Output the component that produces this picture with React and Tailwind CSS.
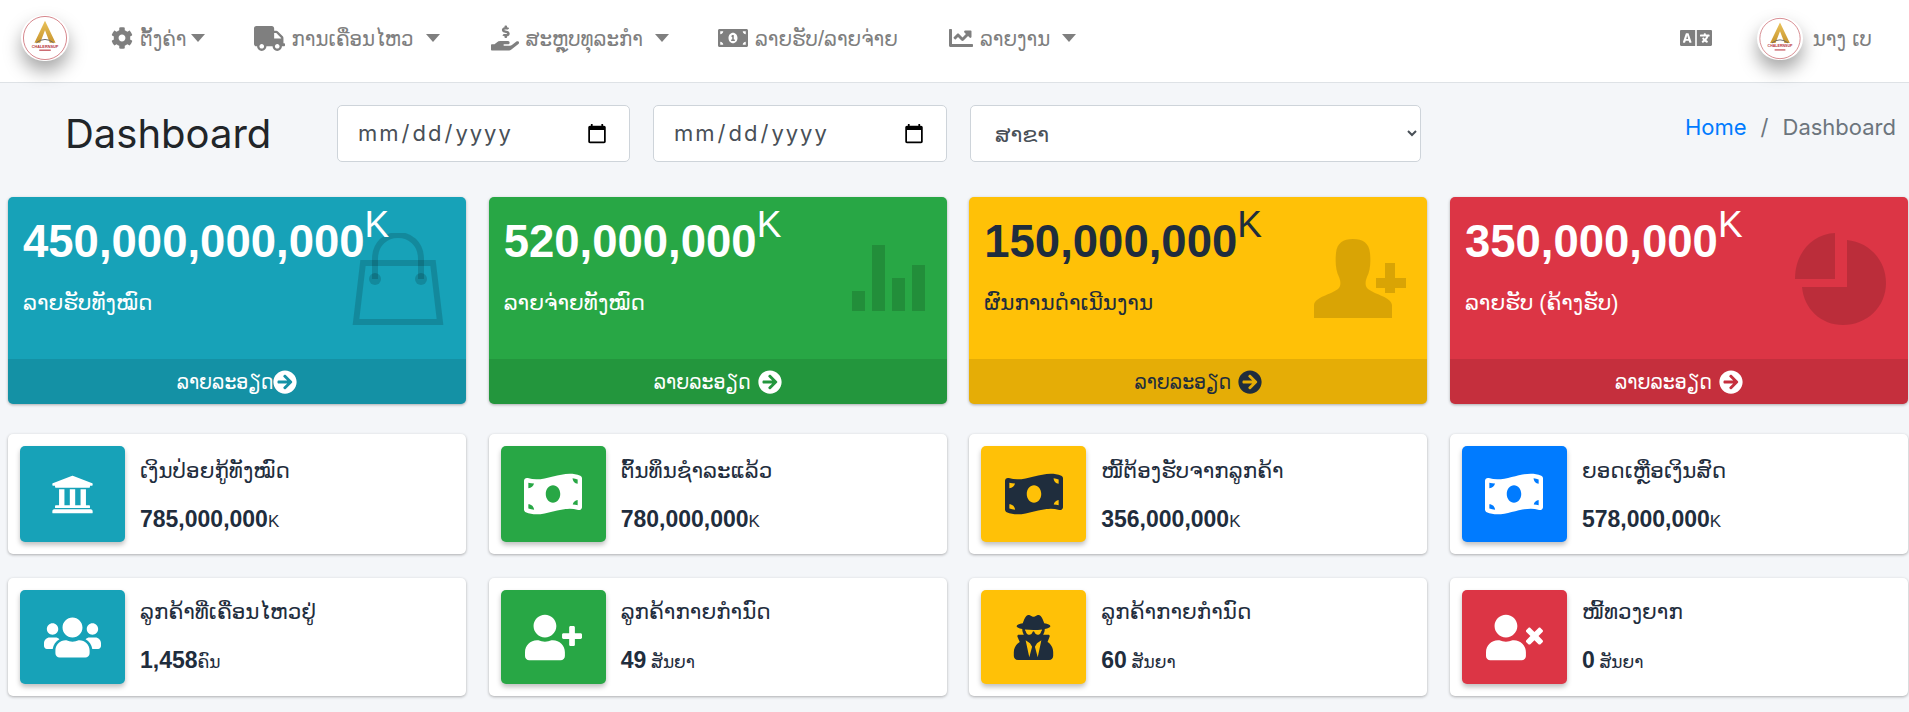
import {
  FaCog,
  FaTruck,
  FaHandHoldingUsd,
  FaMoneyBillAlt,
  FaChartLine,
  FaLanguage,
  FaUniversity,
  FaMoneyBillWave,
  FaUsers,
  FaUserPlus,
  FaUserSecret,
  FaUserTimes,
  FaArrowCircleRight,
} from "react-icons/fa";

const Logo = ({ className, id }) => (
  <div className={`shrink-0 rounded-full bg-white shadow-[0_10px_18px_rgba(0,0,0,0.35)] ${className}`}>
    <svg viewBox="0 0 48 48" className="h-full w-full">
      <defs>
        <linearGradient id={id} x1="0" y1="0" x2="0" y2="1">
          <stop offset="0" stopColor="#e9c25a" />
          <stop offset="1" stopColor="#c9962f" />
        </linearGradient>
      </defs>
      <circle cx="24" cy="24" r="22.5" fill="#fff" stroke="#c9636b" strokeWidth="0.8" />
      <path d="M24 6 L35 29 H29 L24 16 L19 29 H13 Z" fill={`url(#${id})`} />
      <path d="M15 29 Q24 22 33 29" fill="none" stroke="#666" strokeWidth="1" />
      <text x="24" y="34" textAnchor="middle" fontSize="4" fontWeight="700" fill="#b5343c">CHALERNSUP</text>
      <rect x="18" y="36" width="12" height="1.5" fill="#c9636b" />
    </svg>
  </div>
);

const BagIcon = () => (
  <svg viewBox="0 0 92 92" className="h-[92px] w-[92px]" fill="none" stroke="currentColor">
    <path d="M11 30 H81 L88 89 H4 Z" strokeWidth="6" />
    <path d="M23 46 V26 C23 -6 69 -6 69 26 V46" strokeWidth="6" />
    <circle cx="23" cy="46" r="6" fill="currentColor" stroke="none" />
    <circle cx="69" cy="46" r="6" fill="currentColor" stroke="none" />
  </svg>
);

const BarsIcon = () => (
  <svg viewBox="0 0 73 66" className="h-[66px] w-[73px]" fill="currentColor">
    <rect x="0" y="46" width="13" height="20" />
    <rect x="20" y="0" width="13" height="66" />
    <rect x="40" y="33" width="13" height="33" />
    <rect x="60" y="20" width="13" height="46" />
  </svg>
);

const PersonAddIcon = () => (
  <svg viewBox="0 0 92 79" className="h-[79px] w-[92px]" fill="currentColor">
    <path d="M0 79 V66 C1 58 16 56 24 50 C27 47 27 43 25 38 C22 32 21 24 22 14 C23 4 29 0 39 0 C49 0 55 4 56 14 C57 24 56 32 53 38 C51 43 51 47 54 50 C62 56 77 58 78 66 V79 Z" />
    <path d="M71 24 H81 V39 H92 V49 H81 V54 H71 V49 H62 V39 H71 Z" />
  </svg>
);

const PieIcon = () => (
  <svg viewBox="0 0 91 92" className="h-[92px] w-[91px]" fill="currentColor">
    <path d="M40 0 V46 H0 C0 20 17 1 40 0 Z" />
    <path d="M52 7 C74 9 91 27 91 50 C91 74 72 92 48 92 C26 92 9 76 7 54 H52 Z" />
  </svg>
);

const navItems = [
  { icon: FaCog, label: "ຕັ້ງຄ່າ", caret: true, gap: "mr-[49px]", iconCls: "text-[22px]", caretCls: "ml-[4px]" },
  { icon: FaTruck, label: "ການເຄື່ອນໄຫວ", caret: true, gap: "mr-[51px]", iconCls: "text-[31px]", caretCls: "ml-[12px]" },
  { icon: FaHandHoldingUsd, label: "ສະຫຼຸບທຸລະກຳ", caret: true, gap: "mr-[49px]", iconCls: "text-[28px]", caretCls: "ml-[12px]" },
  { icon: FaMoneyBillAlt, label: "ລາຍຮັບ/ລາຍຈ່າຍ", caret: false, gap: "mr-[51px]", iconCls: "text-[30px]", caretCls: "" },
  { icon: FaChartLine, label: "ລາຍງານ", caret: true, gap: "", iconCls: "text-[24px]", caretCls: "ml-[12px]" },
];

const bigCards = [
  { value: "450,000,000,000", label: "ລາຍຮັບທັງໝົດ", bg: "bg-[#17a2b8]", text: "text-white", Icon: BagIcon, pos: "top-[36px] right-[22px]", arrowGap: "ml-0" },
  { value: "520,000,000", label: "ລາຍຈ່າຍທັງໝົດ", bg: "bg-[#28a745]", text: "text-white", Icon: BarsIcon, pos: "top-[48px] right-[22px]", arrowGap: "ml-[7px]" },
  { value: "150,000,000", label: "ຜົນການດຳເນີນງານ", bg: "bg-[#ffc107]", text: "text-[#1f2d3d]", Icon: PersonAddIcon, pos: "top-[42px] right-[21px]", arrowGap: "ml-[7px]" },
  { value: "350,000,000", label: "ລາຍຮັບ (ຄ້າງຮັບ)", bg: "bg-[#dc3545]", text: "text-white", Icon: PieIcon, pos: "top-[36px] right-[22px]", arrowGap: "ml-[7px]" },
];

const infoRows = [
  {
    height: "h-[120px]",
    shift: "pt-[4px]",
    items: [
      { icon: FaUniversity, size: "text-[43px]", bg: "bg-[#17a2b8]", fg: "text-white", title: "ເງິນປ່ອຍກູ້ທັງໝົດ", value: "785,000,000", unit: "K" },
      { icon: FaMoneyBillWave, size: "text-[58px]", bg: "bg-[#28a745]", fg: "text-white", title: "ຕົ້ນທຶນຊຳລະແລ້ວ", value: "780,000,000", unit: "K" },
      { icon: FaMoneyBillWave, size: "text-[58px]", bg: "bg-[#ffc107]", fg: "text-[#1f2d3d]", title: "ໜີ້ຕ້ອງຮັບຈາກລູກຄ້າ", value: "356,000,000", unit: "K" },
      { icon: FaMoneyBillWave, size: "text-[58px]", bg: "bg-[#007bff]", fg: "text-white", title: "ຍອດເຫຼືອເງິນສົດ", value: "578,000,000", unit: "K" },
    ],
  },
  {
    height: "h-[118px]",
    shift: "",
    items: [
      { icon: FaUsers, size: "text-[57px]", bg: "bg-[#17a2b8]", fg: "text-white", title: "ລູກຄ້າທີ່ເຄື່ອນໄຫວຢູ່", value: "1,458", unit: "ຄົນ" },
      { icon: FaUserPlus, size: "text-[57px]", bg: "bg-[#28a745]", fg: "text-white", title: "ລູກຄ້າກາຍກຳນົດ", value: "49", unit: " ສັນຍາ" },
      { icon: FaUserSecret, size: "text-[45px]", bg: "bg-[#ffc107]", fg: "text-[#1f2d3d]", title: "ລູກຄ້າກາຍກຳນົດ", value: "60", unit: " ສັນຍາ" },
      { icon: FaUserTimes, size: "text-[57px]", bg: "bg-[#dc3545]", fg: "text-white", title: "ໜີ້ທວງຍາກ", value: "0", unit: " ສັນຍາ" },
    ],
  },
];

const Caret = ({ className }) => (
  <span className={`inline-block h-0 w-0 border-x-[7px] border-t-[8px] border-x-transparent border-t-[#7f7f7f] ${className}`} />
);

const BigCard = ({ value, label, bg, text, Icon, pos, arrowGap }) => (
  <div className={`relative flex h-[207px] flex-col overflow-hidden rounded-[5px] shadow-[0_1px_3px_rgba(0,0,0,0.3)] ${bg} ${text}`}>
    <div className={`absolute text-black/15 ${pos}`}>
      <Icon />
    </div>
    <div className="relative flex-1 pl-[15px]">
      <div className="mt-[8px] flex h-[66px] items-start leading-none">
        <span className="mt-[11px] text-[45.5px] font-bold leading-[52px]">{value}</span>
        <span className="mt-[1px] text-[37px] leading-[37px]">K</span>
      </div>
      <p className="mt-[16px] text-[21.5px] leading-[32px]">{label}</p>
    </div>
    <div className="relative flex h-[45px] items-center justify-center bg-black/10 text-[21px]">
      <span className="font-stretch-condensed">ລາຍລະອຽດ</span>
      <FaArrowCircleRight className={`text-[24px] ${arrowGap}`} />
    </div>
  </div>
);

const InfoCard = ({ icon: Icon, size, bg, fg, title, value, unit, height, shift }) => (
  <div className={`flex rounded-[5px] bg-white p-[12px] shadow-[0_1px_3px_rgba(0,0,0,0.3)] ${height}`}>
    <div className={`flex w-[105px] shrink-0 items-center justify-center rounded-[5px] shadow-[0_3px_5px_rgba(0,0,0,0.25)] ${bg} ${fg}`}>
      <Icon className={size} />
    </div>
    <div className={`ml-[15px] flex flex-col justify-center gap-[18px] text-[#1f2d3d] ${shift}`}>
      <p className="text-[21.5px] leading-[30px]">{title}</p>
      <p className="leading-[30px]">
        <span className="text-[23px] font-bold">{value}</span>
        <span className="whitespace-pre text-[17px]">{unit}</span>
      </p>
    </div>
  </div>
);

export default function App() {
  return (
    <div className="h-[712px] overflow-hidden bg-[#f4f6f9] font-['Liberation_Sans','DejaVu_Sans',sans-serif]">
      {/* Navbar */}
      <nav className="flex h-[83px] items-center border-b border-[#dee2e6] bg-white pb-[6px] pl-[21px] text-[22px] text-[#7f7f7f]">
        <Logo id="logo-left" className="h-[46px] w-[48px]" />
        <ul className="ml-[42px] flex items-center">
          {navItems.map(({ icon: Icon, label, caret, gap, iconCls, caretCls }) => (
            <li key={label} className={`flex items-center ${gap}`}>
              <Icon className={iconCls} />
              <span className="ml-[7px] font-stretch-condensed">{label}</span>
              {caret && <Caret className={caretCls} />}
            </li>
          ))}
        </ul>
        <div className="ml-auto flex items-center pr-[37px]">
          <FaLanguage className="text-[32px]" />
          <Logo id="logo-right" className="ml-[45px] h-[43px] w-[46px]" />
          <span className="ml-[10px] font-stretch-condensed">ນາງ ເບ</span>
        </div>
      </nav>

      {/* Page header */}
      <div className="flex items-start pt-[22px] font-['Inter','DejaVu_Sans',sans-serif]">
        <h1 className="ml-[65px] mt-[3px] w-[272px] text-[40px] leading-[51px] text-[#212529]">Dashboard</h1>
        <input
          type="date"
          className="h-[57px] w-[293px] rounded-[5px] border border-[#ced4da] bg-white px-[19px] text-[22px] tracking-[2px] text-[#495057]"
        />
        <input
          type="date"
          className="ml-[23px] h-[57px] w-[294px] rounded-[5px] border border-[#ced4da] bg-white px-[19px] text-[22px] tracking-[2px] text-[#495057]"
        />
        <select className="ml-[23px] h-[57px] w-[451px] rounded-[5px] border border-[#ced4da] bg-white px-[20px] text-[22px] text-[#495057]">
          <option>ສາຂາ</option>
        </select>
        <div className="ml-auto mt-[5px] flex pr-[13px] text-[22px] leading-[34px]">
          <a href="#" className="text-[#007bff]">Home</a>
          <span className="mx-[14px] text-[#6c757d]">/</span>
          <span className="text-[#6c757d]">Dashboard</span>
        </div>
      </div>

      {/* Big cards */}
      <div className="mt-[35px] grid grid-cols-4 gap-x-[22.5px] pl-[8px] pr-[1px]">
        {bigCards.map((card) => (
          <BigCard key={card.label} {...card} />
        ))}
      </div>

      {/* Info cards */}
      <div className="mt-[30px] flex flex-col gap-y-[24px] pl-[8px] pr-[1px]">
        {infoRows.map((row) => (
          <div key={row.height} className="grid grid-cols-4 gap-x-[22.5px]">
            {row.items.map((item) => (
              <InfoCard key={item.title + item.value} height={row.height} shift={row.shift} {...item} />
            ))}
          </div>
        ))}
      </div>
    </div>
  );
}
